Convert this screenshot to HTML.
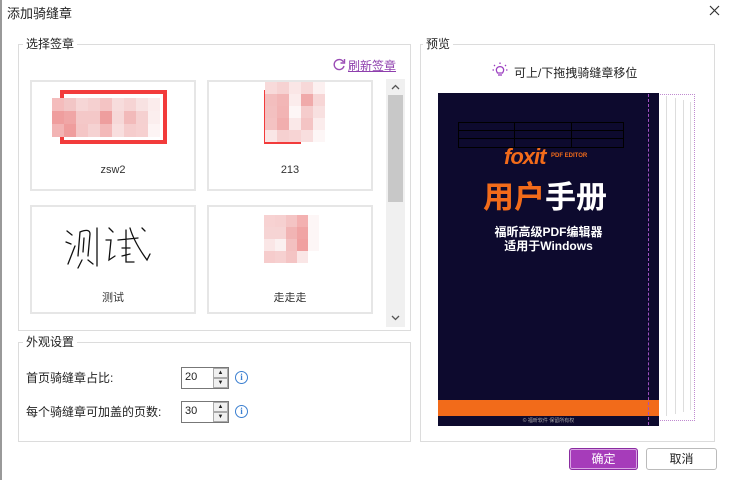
<!DOCTYPE html>
<html><head><meta charset="utf-8"><style>
*{margin:0;padding:0;box-sizing:border-box}
body{width:729px;height:480px;background:#fff;font-family:"Liberation Sans","Noto Sans CJK SC",sans-serif;font-size:12px;color:#222;position:relative;overflow:hidden}
.a{position:absolute}
.grp{position:absolute;border:1px solid #dcdcdc}
.lbl{position:absolute;background:#fff;padding:0 3px;font-size:12px;line-height:14px}
.card{position:absolute;border:2px solid #e6e6e6;background:#fff}
.cap{position:absolute;left:0;right:0;text-align:center;font-size:11px;color:#333}
.m{position:absolute;display:grid}
.m i{display:block}
.spin{position:absolute;width:48px;height:22px;border:1px solid #777;background:#fff}
.spin span{position:absolute;left:3px;top:3px;font-size:11px}
.spin b{position:absolute;right:0;width:15px;height:10px;border:1px solid #aaa;background:#f0f0f0;font-size:6px;text-align:center;line-height:8px;font-weight:normal}
.info{position:absolute;width:13px;height:13px;border:1.3px solid #3b7fd0;border-radius:50%;color:#3b7fd0;font-size:9px;text-align:center;line-height:11px;font-family:"Liberation Serif",serif;font-weight:bold}
.btn{position:absolute;height:22px;border-radius:3px;text-align:center;line-height:20px;font-size:12px}
</style></head><body>
<div class="a" style="left:0;top:0;width:2px;height:480px;background:#999"></div>
<div class="a" style="left:7px;top:3px;font-size:13px">添加骑缝章</div>
<svg class="a" style="left:709px;top:5px" width="11" height="11"><path d="M1 1L10 10M10 1L1 10" stroke="#333" stroke-width="1.2"/></svg>

<div class="grp" style="left:18px;top:44px;width:393px;height:287px"></div>
<div class="lbl" style="left:23px;top:37px">选择签章</div>
<svg class="a" style="left:333px;top:58px" width="13" height="13"><path d="M10.5 4A5 5 0 1 0 11 8" fill="none" stroke="#9a4cb5" stroke-width="1.4"/><path d="M11.5 1V5H7.5" fill="none" stroke="#9a4cb5" stroke-width="1.4"/></svg>
<div class="a" style="left:348px;top:57px;color:#8e3fad;text-decoration:underline;font-size:12px">刷新签章</div>

<div class="card" style="left:30px;top:80px;width:166px;height:111px"></div>
<div class="a" style="left:60px;top:90px;width:107px;height:54px;border:4px solid #f23b3b"></div>
<div class="m" style="left:52px;top:98px;grid-template-columns:repeat(9,12px);grid-auto-rows:13px">
<i style="background:#f4bcbc"></i><i style="background:#f2c6c6"></i><i style="background:#f6d6d6"></i><i style="background:#f5d0d0"></i><i style="background:#f4c4c4"></i><i style="background:#f7dcdc"></i><i style="background:#f6d4d4"></i><i style="background:#f8e2e2"></i><i style="background:#fbecec"></i>
<i style="background:#ef9e9e"></i><i style="background:#f0a6a6"></i><i style="background:#f4c8c8"></i><i style="background:#f4c8c8"></i><i style="background:#ee9e9e"></i><i style="background:#f6d8d8"></i><i style="background:#f2baba"></i><i style="background:#f5d0d0"></i><i style="background:#fbeeee"></i>
<i style="background:#f2b4b4"></i><i style="background:#ef9d9d"></i><i style="background:#f4c6c6"></i><i style="background:#f5d2d2"></i><i style="background:#f3b9b9"></i><i style="background:#f8dede"></i><i style="background:#f5cccc"></i><i style="background:#f6d0d0"></i><i style="background:#fdf4f4"></i>
</div>
<div class="cap" style="left:30px;width:166px;top:164px">zsw2</div>

<div class="card" style="left:207px;top:80px;width:166px;height:111px"></div>
<div class="a" style="left:264px;top:90px;width:37px;height:54px;border:4px solid #f23b3b"></div>
<div class="m" style="left:265px;top:82px;grid-template-columns:repeat(5,12px);grid-auto-rows:12px">
<i style="background:#f8dada"></i><i style="background:#f6d2d2"></i><i style="background:#fae6e6"></i><i style="background:#f7d8d8"></i><i style="background:#fcf0f0"></i>
<i style="background:#f3bebe"></i><i style="background:#f2b6b6"></i><i style="background:#fbecec"></i><i style="background:#f0aaaa"></i><i style="background:#f7d6d6"></i>
<i style="background:#f3c0c0"></i><i style="background:#f2b4b4"></i><i style="background:#fdf6f6"></i><i style="background:#f5cccc"></i><i style="background:#f8e0e0"></i>
<i style="background:#f4c2c2"></i><i style="background:#f1aeae"></i><i style="background:#fae8e8"></i><i style="background:#f4c4c4"></i><i style="background:#fbecec"></i>
<i style="background:#fae6e6"></i><i style="background:#f6d0d0"></i><i style="background:#f7d4d4"></i><i style="background:#f8dede"></i><i style="background:#fdf6f6"></i>
</div>
<div class="cap" style="left:207px;width:166px;top:164px">213</div>

<div class="card" style="left:30px;top:205px;width:166px;height:109px"></div>
<svg class="a" style="left:64px;top:222px" width="92" height="48"><g fill="none" stroke="#111" stroke-width="1.3" stroke-linecap="round"><path d="M3 9L8 13M2 20L7 22M4 42L11 24"/><path d="M16 10L14 34M16 10Q26 6 26 12L24 34M20 16L19 30M18 38L14 46M24 38L29 42"/><path d="M33 6L33 44"/><path d="M45 6L49 10M42 18L47 18L45 38L51 34"/><path d="M54 18L74 16M62 8L62 40L70 40M66 6Q70 20 83 38L86 32M78 6L81 9M58 26L66 26M58 34L66 32"/></g></svg>
<div class="cap" style="left:30px;width:166px;top:289px">测试</div>

<div class="card" style="left:207px;top:205px;width:166px;height:109px"></div>
<div class="m" style="left:264px;top:215px;grid-template-columns:repeat(5,11px);grid-auto-rows:12px">
<i style="background:#f7d2d2"></i><i style="background:#f6d0d0"></i><i style="background:#f4c4c4"></i><i style="background:#f3b0b0"></i><i style="background:#fdf6f6"></i>
<i style="background:#f6d4d4"></i><i style="background:#f6d4d4"></i><i style="background:#f1b4b4"></i><i style="background:#f0a4a4"></i><i style="background:#fdf6f6"></i>
<i style="background:#fae6e6"></i><i style="background:#fbf0f0"></i><i style="background:#f3c0c0"></i><i style="background:#f0a0a0"></i><i style="background:#fdf6f6"></i>
<i style="background:#f6cccc"></i><i style="background:#f6d0d0"></i><i style="background:#f4c4c4"></i><i style="background:#fae6e6"></i><i style="background:#fff"></i>
</div>
<div class="cap" style="left:207px;width:166px;top:289px">走走走</div>

<div class="a" style="left:386px;top:79px;width:19px;height:248px;background:#f0f0f0"></div>
<div class="a" style="left:388px;top:95px;width:15px;height:107px;background:#c8c8c8"></div>
<svg class="a" style="left:391px;top:84px" width="9" height="6"><path d="M1 5L4.5 1.5L8 5" fill="none" stroke="#555" stroke-width="1.3"/></svg>
<svg class="a" style="left:391px;top:315px" width="9" height="6"><path d="M1 1L4.5 4.5L8 1" fill="none" stroke="#555" stroke-width="1.3"/></svg>

<div class="grp" style="left:18px;top:342px;width:393px;height:100px"></div>
<div class="lbl" style="left:23px;top:335px">外观设置</div>
<div class="a" style="left:26px;top:369px">首页骑缝章占比:</div>
<div class="spin" style="left:181px;top:367px"><span>20</span><b style="top:0">▲</b><b style="top:10px">▼</b></div>
<div class="info" style="left:235px;top:371px">i</div>
<div class="a" style="left:26px;top:403px">每个骑缝章可加盖的页数:</div>
<div class="spin" style="left:181px;top:401px"><span>30</span><b style="top:0">▲</b><b style="top:10px">▼</b></div>
<div class="info" style="left:235px;top:405px">i</div>

<div class="grp" style="left:420px;top:44px;width:295px;height:398px"></div>
<div class="lbl" style="left:423px;top:37px">预览</div>
<svg class="a" style="left:492px;top:62px" width="16" height="16"><g fill="none" stroke="#9b3fc0" stroke-width="1.3"><path d="M5.5 11Q3.5 8 5 6A4 4 0 0 1 11 6Q12.5 8 10.5 11Z"/><path d="M6 13H10"/><path d="M8 0.5V2M2 3L3 4M14 3L13 4M0.5 8H2M15.5 8H14"/></g></svg>
<div class="a" style="left:514px;top:64px;font-size:12px">可上/下拖拽骑缝章移位</div>

<div class="a" style="left:650px;top:94px;width:45px;height:327px;border:1px dotted #c08ad0;background:#fff"></div>
<div class="a" style="left:666px;top:96px;width:1px;height:320px;background:#ddd"></div>
<div class="a" style="left:675px;top:98px;width:1px;height:316px;background:#ddd"></div>
<div class="a" style="left:683px;top:100px;width:1px;height:312px;background:#ddd"></div>
<div class="a" style="left:690px;top:102px;width:1px;height:308px;background:#ddd"></div>
<div class="a" style="left:438px;top:93px;width:221px;height:333px;background:#0d0a2e;overflow:hidden">
 <div class="a" style="left:20px;top:29px;width:166px;height:26px;border:1px solid #000"></div>
 <div class="a" style="left:20px;top:37px;width:166px;height:9px;border-top:1px solid #000;border-bottom:1px solid #000"></div>
 <div class="a" style="left:76px;top:29px;width:58px;height:26px;border-left:1px solid #000;border-right:1px solid #000"></div>
 <div class="a" style="left:66px;top:51px;color:#f26b1a;font-size:22px;font-weight:bold;font-style:italic;letter-spacing:-1px">foxit</div>
 <div class="a" style="left:113px;top:60px;color:#f26b1a;font-size:6px;font-weight:bold">PDF EDITOR</div>
 <div class="a" style="left:45px;top:82px;font-size:31px;font-weight:bold;font-family:'Noto Sans CJK SC',sans-serif;line-height:40px"><span style="color:#f26b1a">用户</span><span style="color:#fff">手册</span></div>
 <div class="a" style="left:0;width:221px;top:132px;color:#fff;font-size:12px;font-weight:bold;text-align:center;line-height:14px">福昕高级PDF编辑器<br>适用于Windows</div>
 <div class="a" style="left:0;top:307px;width:221px;height:16px;background:#f26b1a"></div>
 <div class="a" style="left:0;width:221px;top:324px;color:#aaa;font-size:5px;text-align:center">© 福昕软件 保留所有权</div>
</div>
<div class="a" style="left:648px;top:94px;height:331px;border-left:1px dashed #a050c0"></div>

<div class="btn" style="left:569px;top:448px;width:69px;background:#a63cba;color:#fff;border:1px solid #8a2ca0;box-shadow:inset 0 0 0 1px #d9a6e4">确定</div>
<div class="btn" style="left:646px;top:448px;width:71px;background:#fff;border:1px solid #bbb">取消</div>
</body></html>
